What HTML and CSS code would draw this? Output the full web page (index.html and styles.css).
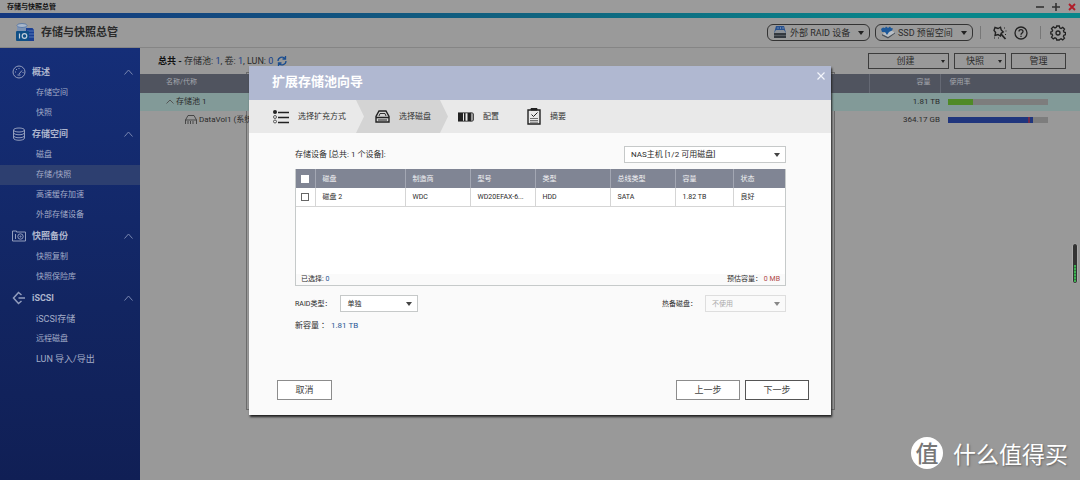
FILE: index.html
```html
<!DOCTYPE html>
<html lang="zh-CN">
<head>
<meta charset="utf-8">
<title>存储与快照总管</title>
<link rel="stylesheet" href="styles.css">
</head>
<body>
<div class="app">
  <div class="titlebar">
    <span class="titlebar-name">存储与快照总管</span>
    <button class="win-btn" aria-label="最小化"><svg width="8" height="8" viewBox="0 0 8 8"><path d="M0 4h8" stroke="#333" stroke-width="1.6"/></svg></button>
    <button class="win-btn" aria-label="最大化"><svg width="8" height="8" viewBox="0 0 8 8"><path d="M0 4h8M4 0v8" stroke="#333" stroke-width="1.6"/></svg></button>
    <button class="win-btn" aria-label="关闭"><svg width="8" height="8" viewBox="0 0 8 8"><path d="M1 1l6 6M7 1l-6 6" stroke="#b01c28" stroke-width="1.8"/></svg></button>
  </div>
  <div class="accent"></div>
  <header class="header">
    <svg class="logo" width="18" height="19" viewBox="0 0 18 19">
      <path d="M1 2.5v6h10v-6z" fill="#7d93b3"/><ellipse cx="6" cy="2.5" rx="5" ry="2" fill="#a9b7ca" stroke="#35609c" stroke-width=".6"/>
      <path d="M10 5h6.500l1.500 2v11h-8z" fill="#1b3f92"/><path d="M11 8h7M11 11h7M11 14h7" stroke="#6f8fc6" stroke-width=".7"/>
      <rect x="0" y="8" width="13" height="10" rx="1" fill="#0f4f86"/><path d="M3.500 10.500v5" stroke="#c3cedb" stroke-width="1.200"/><circle cx="8.500" cy="13" r="2.300" fill="none" stroke="#c3cedb" stroke-width="1.200"/>
    </svg>
    <h1 class="header-title">存储与快照总管</h1>
    <button class="pill">
      <svg width="14" height="13" viewBox="0 0 14 13"><path d="M3 0h8l2 7H1z" fill="#28518e"/><path d="M4.500 2h1M7 2h1M9.500 2h1" stroke="#a8bbd4"/><path d="M3 4h8l2 3H1z" fill="#8b9097"/><path d="M1 7h12v5H1z" fill="#34393f"/><path d="M1 9.500h12" stroke="#6d7278" stroke-width=".6"/></svg>
      <span class="pill-text">外部 RAID 设备</span><i class="caret"></i>
    </button>
    <button class="pill pill-ssd">
      <svg width="14" height="13" viewBox="0 0 14 13"><path d="M1 8v1.500l6 3 7-5V6z" fill="#4a5058"/><path d="M1 8l6 3 7-4.500L9 4z" fill="#b9bfc6"/><path d="M0 3l2-1.500L4 2l1-1.500L7 2l2-1.500L10 2l2 .5-1 2-3 1.500L6 9 4 6 1 6z" fill="#1c5899"/></svg>
      <span class="pill-text">SSD 预留空间</span><i class="caret"></i>
    </button>
    <i class="sep"></i>
    <button class="icon-btn" aria-label="工具"><svg width="14" height="14" viewBox="0 0 14 14" fill="none" stroke="#222" stroke-width="1.400"><path d="M2 1.500l3 1 2.500-1.300L8.200 4l2 2-2 1.300L7.500 10 5 8.600 2 9.500l.6-3L1 4.300z"/><path d="M8 8l4.500 5" stroke-width="1.800"/><path d="M11 2h1M12.500 5h1M12 8.500h1M1 12h1M5 12h1" stroke-width="1"/></svg></button>
    <button class="icon-btn" aria-label="帮助"><svg width="14" height="14" viewBox="0 0 14 14" fill="none" stroke="#222" stroke-width="1.300"><circle cx="7" cy="7" r="6"/><path d="M5 5.500c0-2.700 4-2.500 4 0C9 7 7 7 7 8.800M7 9.800v1.300"/></svg></button>
    <i class="sep"></i>
    <button class="icon-btn" aria-label="设置"><svg width="16" height="16" viewBox="0 0 16 16" fill="none" stroke="#222" stroke-width="1.300"><path d="M6.700 1h2.600l.4 1.900 1.300.6 1.700-1.100 1.800 1.800-1.100 1.700.6 1.200 1.500.4v2.200l-1.600.5-.5 1.300 1.100 1.600-1.800 1.800-1.700-1.100-1.300.6L9.300 15H6.700l-.4-1.600-1.300-.6-1.700 1.100-1.800-1.800 1.100-1.600-.5-1.300L.8 9V7l1.300-.5.500-1.200-1.100-1.700 1.800-1.800L5 2.900l1.300-.6z"/><circle cx="8" cy="8" r="2"/></svg></button>
  </header>
  <div class="content">
    <nav class="sidebar">
      <h2 class="nav-head"><svg width="14" height="14" viewBox="0 0 14 14" class="line"><circle cx="7" cy="7" r="6"/><path d="M7 9l3-3.500M3 7h1M4 4l1 1M7 3v1M5.500 10h3M10.500 7.500h1"/></svg><span class="nav-name">概述</span><svg width="9" height="6" viewBox="0 0 9 6" class="chev"><path d="M.5 5.500l4-4.500 4 4.500"/></svg></h2>
      <a class="nav-item" href="#">存储空间</a>
      <a class="nav-item" href="#">快照</a>
      <h2 class="nav-head"><svg width="14" height="14" viewBox="0 0 14 14" class="line"><ellipse cx="7" cy="3" rx="5.500" ry="2"/><path d="M1.500 3v8c0 3 11 3 11 0V3M1.500 5.500c0 3 11 3 11 0M1.500 8.500c0 3 11 3 11 0"/></svg><span class="nav-name">存储空间</span><svg width="9" height="6" viewBox="0 0 9 6" class="chev"><path d="M.5 5.500l4-4.500 4 4.500"/></svg></h2>
      <a class="nav-item" href="#">磁盘</a>
      <a class="nav-item active" href="#">存储/快照</a>
      <a class="nav-item" href="#">高速缓存加速</a>
      <a class="nav-item" href="#">外部存储设备</a>
      <h2 class="nav-head"><svg width="14" height="14" viewBox="0 0 14 14" class="line"><path d="M.5 3V2h4v1h9v9H.5zM3.500 5v5"/><circle cx="8.500" cy="7.500" r="2.700"/><circle cx="8.500" cy="7.500" r=".6"/></svg><span class="nav-name">快照备份</span><svg width="9" height="6" viewBox="0 0 9 6" class="chev"><path d="M.5 5.500l4-4.500 4 4.500"/></svg></h2>
      <a class="nav-item" href="#">快照复制</a>
      <a class="nav-item" href="#">快照保险库</a>
      <h2 class="nav-head"><svg width="14" height="14" viewBox="0 0 14 14" class="line bold"><path d="M9.500 4L6.500 1.500 1.500 7l5 5.500 3-2.500M6.500 7H13"/></svg><span class="nav-name">iSCSI</span><svg width="9" height="6" viewBox="0 0 9 6" class="chev"><path d="M.5 5.500l4-4.500 4 4.500"/></svg></h2>
      <a class="nav-item mixed" href="#">iSCSI存储</a>
      <a class="nav-item" href="#">远程磁盘</a>
      <a class="nav-item mixed" href="#">LUN 导入/导出</a>
    </nav>
    <main class="main">
      <div class="toolbar">
        <div class="summary"><b class="summary-total">总共 -</b> 存储池: <em class="num">1</em>, 卷: <em class="num">1</em>, LUN: <em class="num">0</em></div>
        <button class="refresh" aria-label="刷新"><svg width="10" height="10" viewBox="0 0 10 10" fill="none" stroke="#1a4d90" stroke-width="1.300"><path d="M1 5a4 4 0 0 1 7-2.500M9 5a4 4 0 0 1-7 2.500M8.500 0v3h-3M1.500 10V7h3"/></svg></button>
        <button class="tool tool-create">创建<i class="caret small"></i></button>
        <button class="tool tool-snap">快照<i class="caret small"></i></button>
        <button class="tool tool-manage">管理</button>
      </div>
      <table class="volumes">
        <colgroup><col><col class="c-cap"><col class="c-use"></colgroup>
        <thead><tr><th class="v-name">名称/代称</th><th class="v-cap">容量</th><th>使用率</th></tr></thead>
        <tbody>
          <tr class="pool"><td class="v-pool"><svg width="8" height="5" viewBox="0 0 8 5" fill="none" stroke="#555"><path d="M.5 4.500L4 1l3.500 3.500"/></svg> 存储池 1</td><td class="v-cap">1.81 TB</td><td><div class="usage"><div class="fill green" style="width:25%"></div></div></td></tr>
          <tr><td class="v-vol"><svg width="12" height="10" viewBox="0 0 12 10" fill="none" stroke="#333"><path d="M.5 9V5L3 .5h6L11.500 5v4M.5 5h11M3 6v3M5.500 6v3M8 6v3" stroke-width=".8"/></svg> DataVol1 (系统)</td><td class="v-cap">364.17 GB</td><td><div class="usage"><div class="fill blue" style="width:80%"></div><div class="fill red" style="width:2%"></div><div class="fill blue" style="width:3%"></div></div></td></tr>
        </tbody>
      </table>
    </main>
  </div>
</div>

<div class="overlay">
  <section class="dialog" role="dialog" aria-labelledby="dlg-title">
    <div class="dialog-head">
      <h2 class="dialog-title" id="dlg-title">扩展存储池向导</h2>
      <button class="close" aria-label="关闭"><svg width="8" height="8" viewBox="0 0 8 8"><path d="M.5.5l7 7M7.500.5l-7 7" stroke="#f3f5fb" stroke-width="1.200"/></svg></button>
    </div>
    <ol class="steps">
      <li class="step step-mode"><svg width="16" height="14" viewBox="0 0 16 14" fill="none" stroke="#222"><circle cx="2" cy="2" r="2" fill="#222" stroke="none"/><circle cx="2" cy="7" r="1.500" stroke-width=".7"/><circle cx="2" cy="11.500" r="1.500" stroke-width=".7"/><path d="M5 2.500h11M5 7.500h11M5 12.500h11" stroke-width="1.400"/></svg>选择扩充方式</li>
      <li class="step step-disk"><svg width="15" height="13" viewBox="0 0 15 13" fill="none" stroke="#222" stroke-width="1.400"><path d="M4 1h7l3 5.500V12H1V6.500zM1 7.500h13"/><path d="M4 6l1-2.500h5L11 6" stroke-width=".9"/><path d="M3 10h9" stroke-width="1"/></svg>选择磁盘</li>
      <li class="step step-config"><svg width="16" height="10" viewBox="0 0 16 10"><path d="M0 1h5v8H0zM6 1h1.500v8H6zM9.500 1H12v8H9.500z" fill="#222"/><path d="M0 .8h12.500v8.400H0M12.500.8h2l1 1.200v6l-1 1.200h-2zM14 1v8" fill="none" stroke="#222" stroke-width=".8"/></svg>配置</li>
      <li class="step step-sum"><svg width="14" height="17" viewBox="0 0 14 17" fill="none" stroke="#222"><path d="M1 2h12v14H1z" stroke-width="1.400"/><path d="M4 .5h6v1.500H4z" fill="#222"/><path d="M4.500 6.500l2 2 4-4" stroke-width="1"/><path d="M3 10.500h8M3 12.500h8M3 14.200h8" stroke-width=".6"/></svg>摘要</li>
    </ol>
    <div class="dialog-body">
      <div class="device-row">
        <label for="device">存储设备 [总共: 1 个设备]:</label>
        <span class="select device"><select id="device"><option>NAS主机 [1/2 可用磁盘]</option></select></span>
      </div>
      <div class="disk-box">
        <table class="disks">
          <colgroup><col class="d-check"><col class="d-disk"><col class="d-maker"><col class="d-model"><col class="d-type"><col class="d-bus"><col class="d-cap"><col></colgroup>
          <thead><tr><th><input type="checkbox" class="check" aria-label="全选"></th><th>磁盘</th><th>制造商</th><th>型号</th><th>类型</th><th>总线类型</th><th>容量</th><th>状态</th></tr></thead>
          <tbody><tr><td><input type="checkbox" class="check" aria-label="磁盘 2"></td><td>磁盘 2</td><td>WDC</td><td>WD20EFAX-6...</td><td>HDD</td><td>SATA</td><td>1.82 TB</td><td>良好</td></tr></tbody>
        </table>
        <div class="disk-foot"><span>已选择: <em class="num link">0</em></span><span>预估容量： <em class="num danger">0 MB</em></span></div>
      </div>
      <div class="raid-row">
        <label for="raid">RAID类型：</label>
        <span class="select raid"><select id="raid"><option>单独</option></select></span>
        <label class="spare-label" for="spare">热备磁盘：</label>
        <span class="select spare"><select id="spare" disabled><option>不使用</option></select></span>
      </div>
      <div class="capacity">新容量 ： <em class="num link">1.81 TB</em></div>
    </div>
    <div class="actions">
      <button class="btn btn-cancel">取消</button>
      <button class="btn">上一步</button>
      <button class="btn btn-next">下一步</button>
    </div>
  </section>
</div>
<div class="meter"><div class="meter-fill"></div></div>
<div class="watermark"><span class="mark">值</span><span>什么值得买</span></div>
</body>
</html>
```

FILE: styles.css
```css
* { box-sizing: border-box; }
body {
  margin: 0;
  font: 8px/12px Roboto, "Noto Sans CJK SC", sans-serif;
  color: #2b2b2b;
  background: #999;
  overflow: hidden;
}
h1, h2, ol { margin: 0; padding: 0; }
button, select, input { font: inherit; color: inherit; margin: 0; }
button { padding: 0; border: 0; background: none; }
em { font-style: normal; }
svg { display: block; flex: none; }

.app { min-height: 100vh; display: flex; flex-direction: column; }
.titlebar {
  height: 13px;
  display: flex;
  align-items: center;
  gap: 8px;
  padding: 0 4px 0 7px;
  background: #9b9b9b;
}
.titlebar-name { flex: 1; font-size: 7px; font-weight: 700; color: #111; }
.accent { height: 5px; background: linear-gradient(90deg, #14377f, #10647f 50%, #08868a 85%); }
.header {
  height: 30px;
  display: flex;
  align-items: center;
  padding: 0 14px 0 16px;
  background: #9a9a9a;
  border-bottom: 1px solid #858585;
}
.header-title { flex: 1; margin-left: 7px; font-size: 11px; font-weight: 700; color: #2b2b2b; }
.pill {
  height: 17px;
  width: 103px;
  display: flex;
  align-items: center;
  padding: 0 5px;
  border: 1px solid #333;
  border-radius: 6px;
  font-size: 9px;
}
.pill-ssd { width: 98px; margin-left: 5px; }
.pill-text { flex: 1; margin-left: 3px; text-align: left; white-space: nowrap; }
.caret { border: 3px solid transparent; border-top: 4px solid #222; border-bottom: 0; }
.caret.small { border-width: 3px 2px 0; }
.sep { width: 1px; height: 13px; margin: 0 5px 0 7px; background: #777; }
.icon-btn { margin-left: 7px; }
.icon-btn + .sep { margin: 0 2px 0 12px; }

.content { flex: 1; display: flex; }
.sidebar { width: 140px; flex: none; padding-top: 13px; background: linear-gradient(#152e78, #122561 60%, #101f55); }
.nav-head {
  height: 22px;
  display: flex;
  align-items: center;
  padding: 0 7px 0 12px;
  font-size: 9px;
  font-weight: 700;
  color: #aeb6cd;
}
.nav-name { flex: 1; margin-left: 6px; }
.line { fill: none; stroke: #929dbd; stroke-width: 1; }
.line.bold { stroke-width: 1.5; }
.chev { fill: none; stroke: #7886b0; stroke-width: 1; }
.nav-item { display: block; padding-left: 36px; line-height: 20px; color: #a3adc8; text-decoration: none; }
.nav-item.mixed { font-size: 9px; }
.nav-item.active { background: #2d3f70; }

.main { flex: 1; min-width: 0; }
.toolbar { height: 26px; display: flex; align-items: center; padding: 0 14px 0 18px; }
.summary { font-size: 9px; white-space: nowrap; }
.summary-total { color: #111; }
.summary .num { color: #163e88; }
.refresh { margin: 0 auto 0 4px; }
.tool {
  height: 16px;
  display: flex;
  align-items: center;
  justify-content: center;
  gap: 14px;
  margin-left: 5px;
  border: 1px solid #3c3c3c;
  font-size: 9px;
}
.tool-create { width: 81px; padding-left: 24px; gap: 26px; }
.tool-snap { width: 52px; padding-left: 8px; }
.tool-manage { width: 55px; }
.volumes { width: 100%; border-collapse: collapse; table-layout: fixed; }
.volumes th { height: 19px; padding: 0 0 3px 9px; background: #50545f; color: #a5a8ae; font-size: 7px; font-weight: 400; text-align: left; border-left: 1px solid #656974; }
.volumes td { height: 18px; padding: 0 0 0 8px; white-space: nowrap; }
.volumes .v-name { padding-left: 26px; border-left: 0; }
.volumes .v-cap { text-align: right; padding: 0 0 0 9px; }
.volumes th.v-cap { padding: 0 9px 3px 0; }
.volumes .v-pool { padding-left: 26px; }
.volumes .v-vol { padding-left: 45px; }
.volumes td svg { display: inline-block; vertical-align: middle; }
.c-cap { width: 71px; }
.c-use { width: 140px; }
.pool { background: #829a98; }
.usage { width: 100px; height: 6px; display: flex; background: #7d7d7d; }
.green { background: #4f8a26; }
.blue { background: #20357d; }
.red { background: #712a4c; }

.overlay { position: absolute; inset: 1px 0 0; display: flex; align-items: center; justify-content: center; }
.dialog {
  position: relative;
  width: 582px;
  background: #fafafa;
  box-shadow: 1px 2px 2px #222;
}
.dialog::before {
  content: "";
  position: absolute;
  z-index: -1;
  inset: 6px -4px 5px -3px;
  background: #999;
  border: 1px solid #6b6b6b;
}
.dialog-head { height: 34px; display: flex; padding: 0 6px 0 23px; background: #b0b8d1; }
.dialog-title { flex: 1; font-size: 13px; line-height: 31px; font-weight: 700; color: #fff; }
.close { height: 20px; }
.steps { height: 33px; display: flex; list-style: none; background: #e9e9e9; color: #333; }
.step { display: flex; align-items: center; gap: 9px; padding-left: 22px; }
.step-mode { width: 107px; padding-left: 24px; white-space: nowrap; }
.step-disk { width: 92px; padding-left: 19px; background: #d4d4d4; clip-path: polygon(0 0, 84px 0, 100% 50%, 84px 100%, 0 100%, 8px 50%); }
.step-config { width: 79px; padding-left: 10px; }
.step-sum { padding-left: 0; }
.dialog-body { padding: 13px 45px 0 46px; }
.device-row, .raid-row { display: flex; align-items: center; }
.device-row { justify-content: space-between; }
.select { position: relative; display: block; height: 17px; }
.select::after {
  content: "";
  position: absolute;
  right: 6px;
  top: 7px;
  border: 3px solid transparent;
  border-top: 4px solid #444;
  border-bottom: 0;
  pointer-events: none;
}
.select select {
  appearance: none;
  width: 100%;
  height: 100%;
  padding: 0 6px;
  border: 1px solid #c6c9c9;
  border-radius: 0;
  background: #fff;
}
.device { width: 162px; }
.disk-box { height: 117px; margin-top: 6px; display: flex; flex-direction: column; background: #fff; border: 1px solid #c6caca; border-top: 0; font-size: 7px; }
.disks { width: 100%; border-collapse: collapse; table-layout: fixed; }
.disks th, .disks td { padding: 0 0 0 7px; border-right: 1px solid #d5d5d5; text-align: left; font-weight: 400; white-space: nowrap; }
.disks th { height: 19px; background: #808594; color: #f3f3f5; border-color: #a3a7b3; }
.disks td { height: 18px; border-bottom: 1px solid #d5d5d5; }
.disks th:first-child, .disks td:first-child { padding: 0; }
.disks th:last-child, .disks td:last-child { border-right: 0; }
.check { appearance: none; display: block; width: 8px; height: 8px; margin: 0 auto; background: #fff; border: 1px solid #666; }
th .check { border-color: #fff; }
.d-check { width: 19px; }
.d-disk { width: 90px; }
.d-maker { width: 65px; }
.d-model { width: 65px; }
.d-type { width: 75px; }
.d-bus { width: 65px; }
.d-cap { width: 58px; }
.disk-foot { margin-top: auto; padding: 0 5px; display: flex; justify-content: space-between; background: #fafafa; line-height: 11px; }
.link { color: #2a5795; }
.danger { color: #b04848; }
.raid-row { margin-top: 9px; font-size: 7px; }
.raid { width: 78px; margin-left: 9px; }
.spare-label { margin-left: auto; }
.spare { width: 81px; margin-left: 8px; }
.spare select { color: #aaa; border-color: #dedede; background: #fafafa; opacity: 1; }
.spare::after { border-top-color: #888; }
.capacity { margin-top: 8px; }
.actions { display: flex; gap: 5px; padding: 48px 22px 15px 28px; }
.btn { width: 64px; height: 20px; border: 1px solid #8c8c8c; background: #fff; font-size: 9px; color: #444; }
.btn-cancel { width: 55px; margin-right: auto; }
.btn-next { border-color: #555; }

.meter { position: absolute; right: 2px; top: 243px; width: 6px; height: 41px; padding: 21px 1px 1px; border: 1px solid #aaa; border-radius: 3px; background: #333; }
.meter-fill { height: 17px; background: repeating-linear-gradient(#3cae50 0 2px, #2a7c3a 2px 3px); }
.watermark {
  position: absolute;
  right: 12px;
  bottom: 11px;
  display: flex;
  align-items: center;
  gap: 10px;
  font: 400 23px/32px "Noto Sans CJK SC", sans-serif;
  color: #fff;
  text-shadow: 1px 1px 2px #666;
}
.mark { width: 32px; height: 32px; border-radius: 50%; background: #fff; color: #777; font-weight: 500; line-height: 30px; text-align: center; text-shadow: none; }
```
